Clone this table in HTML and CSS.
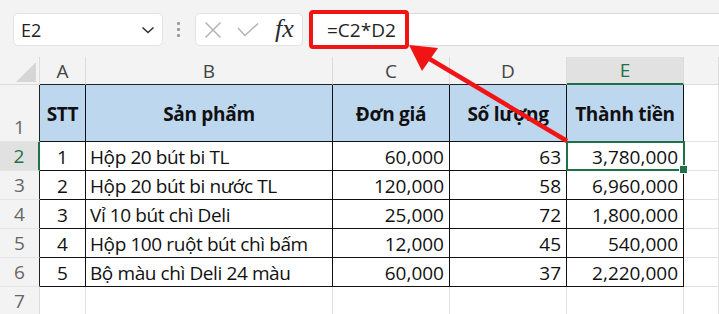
FILE: index.html
```html
<!DOCTYPE html>
<html lang="vi">
<head>
<meta charset="utf-8">
<title>Excel</title>
<link rel="stylesheet" href="styles.css">
</head>
<body>
<div class="page">
  <div class="toolbar">
    <div class="namebox">
      <span class="nb-text">E2</span>
      <svg class="chev" width="14" height="10" viewBox="0 0 14 10"><path d="M1.5 2.5 L7 7.5 L12.5 2.5" fill="none" stroke="#333" stroke-width="1.6"/></svg>
    </div>
    <div class="grip"><i></i><i></i><i></i></div>
    <div class="fxbox">
      <svg class="ico" width="18" height="18" viewBox="0 0 18 18"><path d="M1.5 1.5 L16.5 16.5 M16.5 1.5 L1.5 16.5" stroke="#b4b4b4" stroke-width="1.5" fill="none"/></svg>
      <svg class="ico chk" width="22" height="16" viewBox="0 0 22 16"><path d="M1 6 L8 13.5 L21 1.5" stroke="#b4b4b4" stroke-width="1.5" fill="none"/></svg>
      <span class="fx">fx</span>
    </div>
    <div class="formula"><span class="ftext">=C2*D2</span></div>
  </div>

  <div class="sheet">
    <div class="ch corner"></div>
    <div class="ch bt">A</div>
    <div class="ch bt">B</div>
    <div class="ch bt">C</div>
    <div class="ch bt">D</div>
    <div class="ch bt selc">E</div>
    <div class="ch"></div>

    <div class="rh rb bottom">1</div>
    <div class="c t hd">STT</div>
    <div class="c t hd">Sản phẩm</div>
    <div class="c t hd">Đơn giá</div>
    <div class="c t hd">Số lượng</div>
    <div class="c t hd">Thành tiền</div>
    <div class="c"></div>

    <div class="rh rb selr">2</div>
    <div class="c t ctr">1</div>
    <div class="c t txt">Hộp 20 bút bi TL</div>
    <div class="c t num">60,000</div>
    <div class="c t num">63</div>
    <div class="c t num sel">3,780,000</div>
    <div class="c"></div>

    <div class="rh rb">3</div>
    <div class="c t ctr">2</div>
    <div class="c t txt">Hộp 20 bút bi nước TL</div>
    <div class="c t num">120,000</div>
    <div class="c t num">58</div>
    <div class="c t num">6,960,000</div>
    <div class="c"></div>

    <div class="rh rb">4</div>
    <div class="c t ctr">3</div>
    <div class="c t txt">Vỉ 10 bút chì Deli</div>
    <div class="c t num">25,000</div>
    <div class="c t num">72</div>
    <div class="c t num">1,800,000</div>
    <div class="c"></div>

    <div class="rh rb">5</div>
    <div class="c t ctr">4</div>
    <div class="c t txt">Hộp 100 ruột bút chì bấm</div>
    <div class="c t num">12,000</div>
    <div class="c t num">45</div>
    <div class="c t num">540,000</div>
    <div class="c"></div>

    <div class="rh rb">6</div>
    <div class="c t ctr">5</div>
    <div class="c t txt">Bộ màu chì Deli 24 màu</div>
    <div class="c t num">60,000</div>
    <div class="c t num">37</div>
    <div class="c t num">2,220,000</div>
    <div class="c"></div>

    <div class="rh">7</div>
    <div class="c"></div>
    <div class="c"></div>
    <div class="c"></div>
    <div class="c"></div>
    <div class="c"></div>
    <div class="c"></div>
  </div>

  <div class="callout"></div>
  <svg class="arrow" width="719" height="314" viewBox="0 0 719 314">
    <line x1="567" y1="141" x2="428" y2="58" stroke="#f01414" stroke-width="4.5"/>
    <polygon points="409,45 422,71 438,48" fill="#f01414"/>
  </svg>
</div>
</body>
</html>
```

FILE: styles.css
```css
* { box-sizing: border-box; }
html, body { margin: 0; padding: 0; }
body {
  width: 719px;
  height: 314px;
  overflow: hidden;
  background: #ffffff;
  font-family: "Open Sans", "Noto Sans", sans-serif;
}
.page { position: relative; width: 719px; height: 314px; overflow: hidden; }

.toolbar {
  height: 57px;
  background: #f3f3f3;
  display: flex;
  align-items: flex-start;
  padding: 13px 0 0 13px;
}
.namebox {
  width: 150px;
  height: 33px;
  background: #fff;
  border: 1px solid #e3e3e3;
  border-radius: 5px;
  display: flex;
  align-items: center;
  justify-content: space-between;
  padding: 0 7px 0 7px;
}
.nb-text { font-size: 18px; color: #222; }
.grip {
  width: 4px;
  margin: 0 14px;
  height: 33px;
  display: flex;
  flex-direction: column;
  justify-content: center;
  gap: 3px;
}
.grip i { display: block; width: 3px; height: 3px; background: #9a9a9a; border-radius: 1px; }
.fxbox {
  width: 108px;
  height: 33px;
  background: #fff;
  border: 1px solid #e3e3e3;
  border-radius: 5px;
  display: flex;
  align-items: center;
  padding-left: 8px;
}
.ico { display: block; }
.chk { margin-left: 15px; }
.fx {
  margin-left: 16px;
  font-family: "Liberation Serif", "DejaVu Serif", serif;
  font-style: italic;
  font-size: 26px;
  line-height: 1;
  color: #2a2a2a;
  margin-top: -2px;
}
.formula {
  flex: 1;
  margin-left: 7px;
  height: 33px;
  background: #fff;
  border-top: 1px solid #dadada;
  border-bottom: 1px solid #dadada;
  display: flex;
  align-items: center;
  padding-left: 17px;
}
.ftext { font-size: 19px; color: #222; }

.callout {
  position: absolute;
  left: 309px;
  top: 10px;
  width: 100px;
  height: 39px;
  border: 4px solid #f01414;
  border-radius: 4px;
}
.arrow { position: absolute; left: 0; top: 0; pointer-events: none; }

.sheet {
  display: grid;
  grid-template-columns: 40px 46px 247px 117px 117px 117px 1fr;
  grid-template-rows: 28px 57px repeat(6, 29px) 29px;
}
.ch {
  background: #f3f3f3;
  border-right: 1px solid #dcdcdc;
  border-bottom: 1px solid #dcdcdc;
  font-size: 19px;
  color: #444;
  display: flex;
  align-items: center;
  justify-content: center;
}
.ch.bt { border-bottom-color: #222; }
.corner { position: relative; }
.corner::after {
  content: "";
  position: absolute;
  left: 16px;
  top: 5px;
  width: 20px;
  height: 20px;
  background: #d6d6d6;
  clip-path: polygon(100% 0, 100% 100%, 0 100%);
}
.ch.selc {
  background: #e1e1e1;
  color: #1f7246;
  border-bottom: 2px solid #1f7246;
}
.rh {
  background: #f3f3f3;
  border-right: 1px solid #dcdcdc;
  border-bottom: 1px solid #e4e4e4;
  font-size: 19px;
  color: #666;
  display: flex;
  align-items: center;
  justify-content: center;
}
.rh.rb { border-right-color: #222; }
.rh.bottom { align-items: flex-end; padding-bottom: 1px; }
.rh.selr {
  background: #e1e1e1;
  color: #1f7246;
  border-right: 2px solid #1f7246;
}

.c {
  border-right: 1px solid #e1e1e1;
  border-bottom: 1px solid #e1e1e1;
  font-size: 19px;
  color: #111;
  display: flex;
  align-items: center;
  padding: 1px 4px 0 4px;
  white-space: nowrap;
}
.c.t { border-right-color: #111; border-bottom-color: #111; }
.c.txt { letter-spacing: -0.4px; }
.c.hd {
  background: #bdd7ee;
  font-weight: 700;
  justify-content: center;
  letter-spacing: -0.3px;
}
.c.ctr { justify-content: center; }
.c.num { justify-content: flex-end; padding-right: 5px; }
.c.sel { position: relative; }
.c.sel::after {
  content: "";
  position: absolute;
  left: -1px;
  top: -1px;
  right: -2px;
  bottom: -1px;
  border: 2px solid #1f7246;
}
.c.sel::before {
  content: "";
  position: absolute;
  right: -5px;
  bottom: -4px;
  width: 7px;
  height: 7px;
  background: #1f7246;
  border: 1px solid #fff;
  z-index: 2;
}
```
